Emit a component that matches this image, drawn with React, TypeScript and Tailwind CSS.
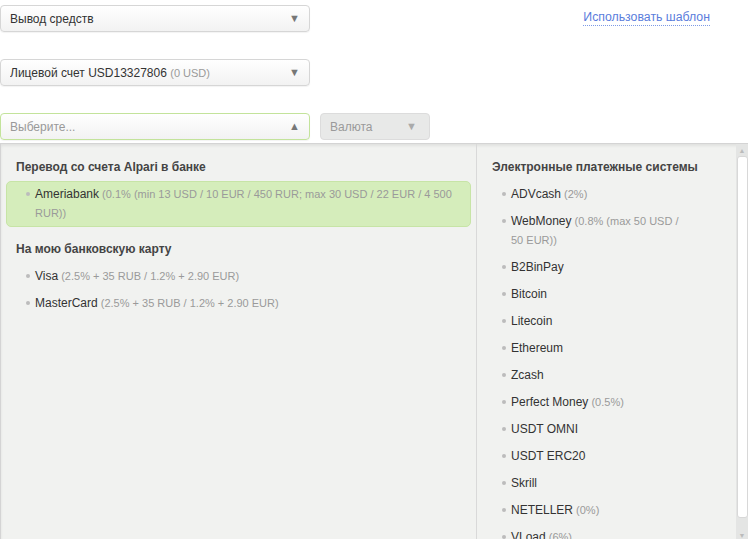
import React from 'react';

type Item = { name: string; note?: string };

const bankItems: Item[] = [
  { name: 'Ameriabank', note: '(0.1% (min 13 USD / 10 EUR / 450 RUR; max 30 USD / 22 EUR / 4 500 RUR))' },
];

const cardItems: Item[] = [
  { name: 'Visa', note: '(2.5% + 35 RUB / 1.2% + 2.90 EUR)' },
  { name: 'MasterCard', note: '(2.5% + 35 RUB / 1.2% + 2.90 EUR)' },
];

const epsItems: Item[] = [
  { name: 'ADVcash', note: '(2%)' },
  { name: 'WebMoney', note: '(0.8% (max 50 USD / 50 EUR))' },
  { name: 'B2BinPay' },
  { name: 'Bitcoin' },
  { name: 'Litecoin' },
  { name: 'Ethereum' },
  { name: 'Zcash' },
  { name: 'Perfect Money', note: '(0.5%)' },
  { name: 'USDT OMNI' },
  { name: 'USDT ERC20' },
  { name: 'Skrill' },
  { name: 'NETELLER', note: '(0%)' },
  { name: 'VLoad', note: '(6%)' },
];

const Select = ({
  children,
  up,
  active,
}: {
  children: React.ReactNode;
  up?: boolean;
  active?: boolean;
}) => (
  <div
    className={`flex items-center justify-between w-[310px] h-[27px] pl-[9px] pr-[9px] rounded-[4px] border bg-linear-to-b from-white to-[#f2f2f2] shadow-[0_1px_1px_rgba(0,0,0,0.05)] ${
      active ? 'border-[#c3e39b]' : 'border-[#d6d6d6]'
    }`}
  >
    <div className="truncate text-[12px]">{children}</div>
    <span className="text-[11px] text-[#777]">{up ? '▲' : '▼'}</span>
  </div>
);

const Row = ({ item, textWidth, selected }: { item: Item; textWidth: string; selected?: boolean }) => (
  <div
    className={`flex items-start pl-[19px] py-[3px] rounded-[5px] border ${
      selected ? 'bg-[#d5edbb] border-[#c7e4a6]' : 'border-transparent'
    }`}
  >
    <span className="mt-[7px] mr-[5px] w-[4px] h-[4px] rounded-full bg-[#bcbcbc] shrink-0" />
    <div className={`${textWidth} leading-[19px] text-[12px] text-[#333]`}>
      {item.name}
      {item.note && <span className="text-[11px] text-[#9a9a9a]"> {item.note}</span>}
    </div>
  </div>
);

const Heading = ({ children }: { children: React.ReactNode }) => (
  <div className="h-[20px] leading-[20px] px-[10px] mb-[4px] text-[12px] font-bold text-[#444]">
    {children}
  </div>
);

export default function App() {
  return (
    <div className="w-[748px] h-[539px] overflow-hidden bg-white font-['Liberation_Sans',Arial,sans-serif] text-[12px] text-[#333]">
      <div className="pt-[5px] flex items-center justify-between pr-[38px]">
        <Select>Вывод средств</Select>
        <a className="text-[12.3px] text-[#5a7ddc] border-b border-dotted border-[#7d9ae6] leading-[15px] mt-[-1px]">
          Использовать шаблон
        </a>
      </div>

      <div className="mt-[27px]">
        <Select>
          Лицевой счет USD13327806 <span className="text-[11px] text-[#9a9a9a]">(0 USD)</span>
        </Select>
      </div>

      <div className="mt-[27px] flex gap-[10px]">
        <Select up active>
          <span className="text-[12px] text-[#999]">Выберите...</span>
        </Select>
        <div className="flex items-center justify-between w-[110px] h-[27px] pl-[9px] pr-[12px] rounded-[4px] border border-[#dcdcdc] bg-[#e8e9e8]">
          <span className="text-[12px] text-[#9a9a9a]">Валюта</span>
          <span className="text-[11px] text-[#aaa]">▼</span>
        </div>
      </div>

      <div className="mt-[3px] h-[400px] flex bg-[#f1f2f0] border-t border-l border-[#d4d4d4] shadow-[inset_0_2px_3px_rgba(0,0,0,0.07)]">
        <div className="w-[476px] border-r border-[#d9d9d9] px-[5px] pt-[13px]">
          <Heading>Перевод со счета Alpari в банке</Heading>
          {bankItems.map((it) => (
            <Row key={it.name} item={it} textWidth="w-[425px]" selected />
          ))}
          <div className="mt-[12px]">
            <Heading>На мою банковскую карту</Heading>
          </div>
          {cardItems.map((it) => (
            <Row key={it.name} item={it} textWidth="w-[425px]" />
          ))}
        </div>

        <div className="flex-1 px-[5px] pt-[13px]">
          <Heading>Электронные платежные системы</Heading>
          {epsItems.map((it) => (
            <Row key={it.name} item={it} textWidth="w-[172px]" />
          ))}
        </div>

        <div className="w-[12px] flex flex-col items-center bg-[#e4e5e4] pt-[2px]">
          <span className="text-[7px] leading-[9px] text-[#bbb]">▲</span>
          <div className="w-[11px] h-[362px] mt-[1px] ml-[1px] bg-white border border-[#d8d8d8] rounded-[3px]" />
          <span className="mt-[13px] text-[7px] leading-[9px] text-[#bbb]">▼</span>
        </div>
      </div>
    </div>
  );
}
